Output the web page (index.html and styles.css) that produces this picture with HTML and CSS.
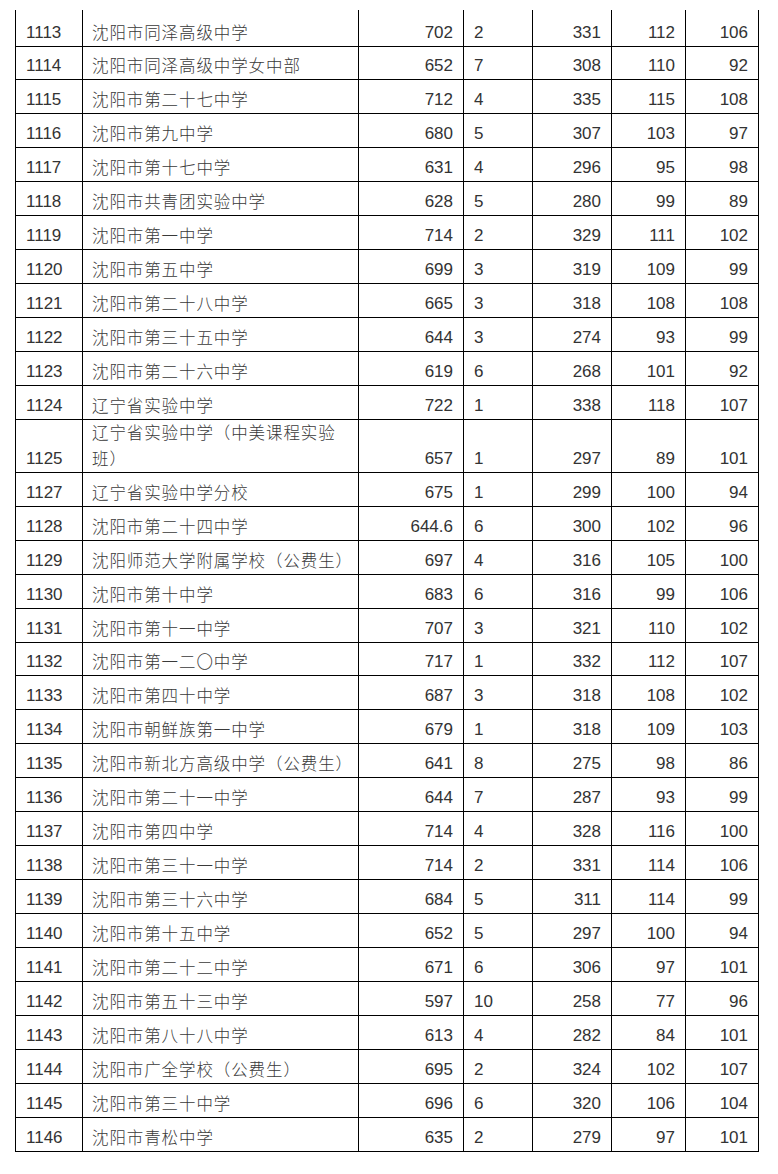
FILE: index.html
```html
<!DOCTYPE html>
<html lang="zh-CN">
<head>
<meta charset="utf-8">
<title>录取分数线</title>
<link rel="stylesheet" href="styles.css">
</head>
<body>
<table class="scores">
<colgroup>
<col class="c-id"><col class="c-name"><col class="c-total"><col class="c-rank"><col class="c-a"><col class="c-b"><col class="c-c">
</colgroup>
<tbody>
<tr><td>1113</td><td class="name">沈阳市同泽高级中学</td><td class="num">702</td><td>2</td><td class="num">331</td><td class="num">112</td><td class="num">106</td></tr>
<tr><td>1114</td><td class="name">沈阳市同泽高级中学女中部</td><td class="num">652</td><td>7</td><td class="num">308</td><td class="num">110</td><td class="num">92</td></tr>
<tr><td>1115</td><td class="name">沈阳市第二十七中学</td><td class="num">712</td><td>4</td><td class="num">335</td><td class="num">115</td><td class="num">108</td></tr>
<tr><td>1116</td><td class="name">沈阳市第九中学</td><td class="num">680</td><td>5</td><td class="num">307</td><td class="num">103</td><td class="num">97</td></tr>
<tr><td>1117</td><td class="name">沈阳市第十七中学</td><td class="num">631</td><td>4</td><td class="num">296</td><td class="num">95</td><td class="num">98</td></tr>
<tr><td>1118</td><td class="name">沈阳市共青团实验中学</td><td class="num">628</td><td>5</td><td class="num">280</td><td class="num">99</td><td class="num">89</td></tr>
<tr><td>1119</td><td class="name">沈阳市第一中学</td><td class="num">714</td><td>2</td><td class="num">329</td><td class="num">111</td><td class="num">102</td></tr>
<tr><td>1120</td><td class="name">沈阳市第五中学</td><td class="num">699</td><td>3</td><td class="num">319</td><td class="num">109</td><td class="num">99</td></tr>
<tr><td>1121</td><td class="name">沈阳市第二十八中学</td><td class="num">665</td><td>3</td><td class="num">318</td><td class="num">108</td><td class="num">108</td></tr>
<tr><td>1122</td><td class="name">沈阳市第三十五中学</td><td class="num">644</td><td>3</td><td class="num">274</td><td class="num">93</td><td class="num">99</td></tr>
<tr><td>1123</td><td class="name">沈阳市第二十六中学</td><td class="num">619</td><td>6</td><td class="num">268</td><td class="num">101</td><td class="num">92</td></tr>
<tr><td>1124</td><td class="name">辽宁省实验中学</td><td class="num">722</td><td>1</td><td class="num">338</td><td class="num">118</td><td class="num">107</td></tr>
<tr class="tall"><td>1125</td><td class="name">辽宁省实验中学（中美课程实验班）</td><td class="num">657</td><td>1</td><td class="num">297</td><td class="num">89</td><td class="num">101</td></tr>
<tr><td>1127</td><td class="name">辽宁省实验中学分校</td><td class="num">675</td><td>1</td><td class="num">299</td><td class="num">100</td><td class="num">94</td></tr>
<tr><td>1128</td><td class="name">沈阳市第二十四中学</td><td class="num">644.6</td><td>6</td><td class="num">300</td><td class="num">102</td><td class="num">96</td></tr>
<tr><td>1129</td><td class="name">沈阳师范大学附属学校（公费生）</td><td class="num">697</td><td>4</td><td class="num">316</td><td class="num">105</td><td class="num">100</td></tr>
<tr><td>1130</td><td class="name">沈阳市第十中学</td><td class="num">683</td><td>6</td><td class="num">316</td><td class="num">99</td><td class="num">106</td></tr>
<tr><td>1131</td><td class="name">沈阳市第十一中学</td><td class="num">707</td><td>3</td><td class="num">321</td><td class="num">110</td><td class="num">102</td></tr>
<tr><td>1132</td><td class="name">沈阳市第一二〇中学</td><td class="num">717</td><td>1</td><td class="num">332</td><td class="num">112</td><td class="num">107</td></tr>
<tr><td>1133</td><td class="name">沈阳市第四十中学</td><td class="num">687</td><td>3</td><td class="num">318</td><td class="num">108</td><td class="num">102</td></tr>
<tr><td>1134</td><td class="name">沈阳市朝鲜族第一中学</td><td class="num">679</td><td>1</td><td class="num">318</td><td class="num">109</td><td class="num">103</td></tr>
<tr><td>1135</td><td class="name">沈阳市新北方高级中学（公费生）</td><td class="num">641</td><td>8</td><td class="num">275</td><td class="num">98</td><td class="num">86</td></tr>
<tr><td>1136</td><td class="name">沈阳市第二十一中学</td><td class="num">644</td><td>7</td><td class="num">287</td><td class="num">93</td><td class="num">99</td></tr>
<tr><td>1137</td><td class="name">沈阳市第四中学</td><td class="num">714</td><td>4</td><td class="num">328</td><td class="num">116</td><td class="num">100</td></tr>
<tr><td>1138</td><td class="name">沈阳市第三十一中学</td><td class="num">714</td><td>2</td><td class="num">331</td><td class="num">114</td><td class="num">106</td></tr>
<tr><td>1139</td><td class="name">沈阳市第三十六中学</td><td class="num">684</td><td>5</td><td class="num">311</td><td class="num">114</td><td class="num">99</td></tr>
<tr><td>1140</td><td class="name">沈阳市第十五中学</td><td class="num">652</td><td>5</td><td class="num">297</td><td class="num">100</td><td class="num">94</td></tr>
<tr><td>1141</td><td class="name">沈阳市第二十二中学</td><td class="num">671</td><td>6</td><td class="num">306</td><td class="num">97</td><td class="num">101</td></tr>
<tr><td>1142</td><td class="name">沈阳市第五十三中学</td><td class="num">597</td><td>10</td><td class="num">258</td><td class="num">77</td><td class="num">96</td></tr>
<tr><td>1143</td><td class="name">沈阳市第八十八中学</td><td class="num">613</td><td>4</td><td class="num">282</td><td class="num">84</td><td class="num">101</td></tr>
<tr><td>1144</td><td class="name">沈阳市广全学校（公费生）</td><td class="num">695</td><td>2</td><td class="num">324</td><td class="num">102</td><td class="num">107</td></tr>
<tr><td>1145</td><td class="name">沈阳市第三十中学</td><td class="num">696</td><td>6</td><td class="num">320</td><td class="num">106</td><td class="num">104</td></tr>
<tr><td>1146</td><td class="name">沈阳市青松中学</td><td class="num">635</td><td>2</td><td class="num">279</td><td class="num">97</td><td class="num">101</td></tr>
</tbody>
</table>
</body>
</html>
```

FILE: styles.css
```css
html, body {
  margin: 0;
  padding: 0;
  background: #ffffff;
}

body {
  padding: 10px 0 0 15px;
  font-family: "Liberation Sans", "Noto Sans CJK SC", sans-serif;
  font-size: 17px;
  color: #333333;
}

.scores {
  border-collapse: collapse;
  table-layout: fixed;
  width: 743px;
}

.c-id { width: 67px; }
.c-name { width: 276px; }
.c-total { width: 105px; }
.c-rank { width: 69px; }
.c-a { width: 79px; }
.c-b { width: 74px; }
.c-c { width: 73px; }

.scores tr {
  height: 33.94px;
}

.scores tr:first-child {
  height: 36px;
}

.scores tr.tall {
  height: 53px;
}

.scores td {
  border: 1px solid #000;
  padding: 0 9px 0 10px;
  line-height: 26px;
  vertical-align: bottom;
  text-align: left;
}

.scores tr:first-child td {
  border-top-style: hidden;
}

.scores td.name {
  font-size: 16.5px;
  font-weight: 300;
  color: #3a3a3a;
  letter-spacing: 0.9px;
  padding-left: 9px;
  padding-right: 8px;
}

.scores td.num {
  text-align: right;
  padding-right: 10px;
}
```
